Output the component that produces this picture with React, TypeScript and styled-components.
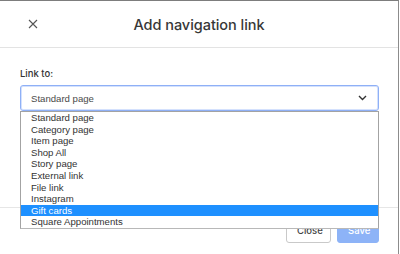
import React from "react";
import styled, { createGlobalStyle } from "styled-components";

const Global = createGlobalStyle`
  html, body { margin: 0; padding: 0; background: #ffffff; }
  * { box-sizing: border-box; }
`;

const Frame = styled.div`
  width: 399px;
  height: 254px;
  background: #ffffff;
  border-top: 1px solid #7d7d7d;
  border-right: 1px solid #8c8c8c;
  display: flex;
  flex-direction: column;
  font-family: "Liberation Sans", Arial, sans-serif;
  color: #333;
  overflow: hidden;
`;

const Header = styled.div`
  position: relative;
  height: 47px;
  flex: none;
  display: flex;
  align-items: center;
  justify-content: center;
  border-bottom: 1px solid #e3e3e3;
`;

const CloseIcon = styled.button`
  position: absolute;
  left: 27px;
  top: 17px;
  width: 12px;
  height: 12px;
  padding: 0;
  border: none;
  background: transparent;
  display: flex;
  align-items: center;
  justify-content: center;
`;

const Title = styled.h1`
  margin: 0;
  font-family: Inter, "Liberation Sans", sans-serif;
  font-size: 14.5px;
  font-weight: 500;
  color: #373737;
  letter-spacing: -0.05px;
`;

const Body = styled.div`
  flex: 1;
  padding: 19px 19px 0 20px;
  display: flex;
  flex-direction: column;
`;

const Label = styled.label`
  font-family: Inter, "Liberation Sans", sans-serif;
  font-size: 9.5px;
  font-weight: 500;
  line-height: 14px;
  color: #333;
  margin-bottom: 4px;
`;

const SelectWrap = styled.div`
  position: relative;
`;

const SelectBox = styled.div`
  height: 26px;
  border: 1px solid #8fb0f6;
  box-shadow: inset 0 0 0 1px #d4e1fd;
  border-radius: 3px;
  display: flex;
  align-items: center;
  justify-content: space-between;
  padding: 0 11px 0 10px;
  font-size: 9.6px;
  color: #4a4a4a;
`;

const List = styled.ul`
  position: absolute;
  left: 0;
  right: 0;
  top: 26px;
  margin: 0;
  padding: 0;
  list-style: none;
  background: #ffffff;
  border: 1px solid #a3a3a3;
  border-bottom-color: #b8b8b8;
  z-index: 2;
`;

const Item = styled.li<{ $active?: boolean }>`
  height: 11.6px;
  line-height: 11.6px;
  padding-left: 10px;
  font-size: 9.6px;
  color: ${(p) => (p.$active ? "#ffffff" : "#333")};
  background: ${(p) => (p.$active ? "#1e90ff" : "transparent")};
  white-space: nowrap;
`;

const Footer = styled.div`
  flex: none;
  height: 47px;
  border-top: 1px solid #e6e6e6;
  display: flex;
  justify-content: flex-end;
  align-items: flex-start;
  gap: 6px;
  padding: 10px 19px 0 20px;
`;

const Button = styled.button<{ $primary?: boolean }>`
  height: 25px;
  padding: 0 10px;
  border-radius: 3px;
  font-family: Inter, "Liberation Sans", sans-serif;
  font-size: 9.5px;
  font-weight: 500;
  border: 1px solid ${(p) => (p.$primary ? "#8db3f7" : "#c9c9c9")};
  background: ${(p) => (p.$primary ? "#8db3f7" : "#ffffff")};
  color: ${(p) => (p.$primary ? "#ffffff" : "#444")};
  width: ${(p) => (p.$primary ? "42px" : "45px")};
`;

const options = [
  "Standard page",
  "Category page",
  "Item page",
  "Shop All",
  "Story page",
  "External link",
  "File link",
  "Instagram",
  "Gift cards",
  "Square Appointments",
];

export default function App() {
  return (
    <>
      <Global />
      <Frame>
        <Header>
          <CloseIcon aria-label="Close">
            <svg width="10" height="10" viewBox="0 0 10 10">
              <path d="M1 1 L9 9 M9 1 L1 9" stroke="#555" strokeWidth="1.1" fill="none" />
            </svg>
          </CloseIcon>
          <Title>Add navigation link</Title>
        </Header>
        <Body>
          <Label>Link to:</Label>
          <SelectWrap>
            <SelectBox>
              <span>Standard page</span>
              <svg width="9" height="6" viewBox="0 0 9 6">
                <path d="M1 1 L4.5 4.5 L8 1" stroke="#333" strokeWidth="1.4" fill="none" />
              </svg>
            </SelectBox>
            <List>
              {options.map((o) => (
                <Item key={o} $active={o === "Gift cards"}>
                  {o}
                </Item>
              ))}
            </List>
          </SelectWrap>
        </Body>
        <Footer>
          <Button>Close</Button>
          <Button $primary>Save</Button>
        </Footer>
      </Frame>
    </>
  );
}
